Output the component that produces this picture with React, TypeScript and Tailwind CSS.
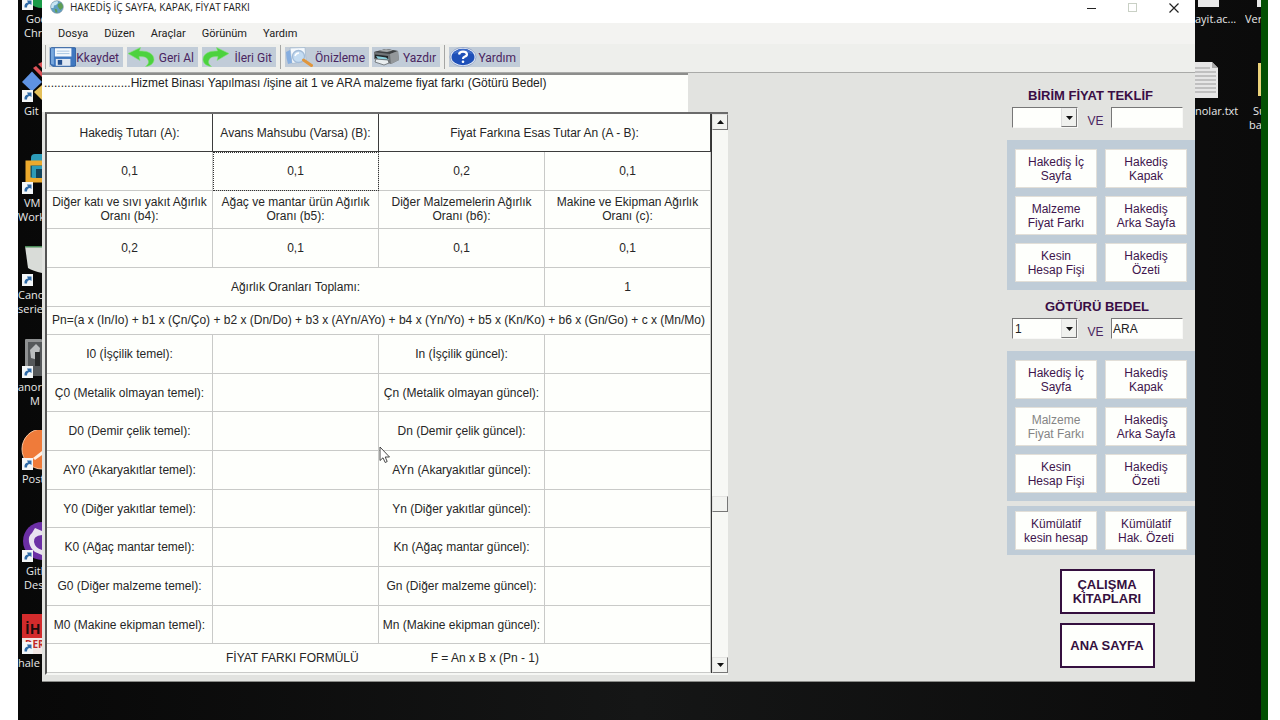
import { useState } from "react"
import type { ReactNode } from "react"
import clsx from "clsx"

const menus = ["Dosya", "Düzen", "Araçlar", "Görünüm", "Yardım"]

const indexRows = [
  ["I0 (İşçilik temel):", "In (İşçilik güncel):"],
  ["Ç0 (Metalik olmayan temel):", "Çn (Metalik olmayan güncel):"],
  ["D0 (Demir çelik temel):", "Dn (Demir çelik güncel):"],
  ["AY0 (Akaryakıtlar temel):", "AYn (Akaryakıtlar güncel):"],
  ["Y0 (Diğer yakıtlar temel):", "Yn (Diğer yakıtlar güncel):"],
  ["K0 (Ağaç mantar temel):", "Kn (Ağaç mantar güncel):"],
  ["G0 (Diğer malzeme temel):", "Gn (Diğer malzeme güncel):"],
  ["M0 (Makine ekipman temel):", "Mn (Makine ekipman güncel):"],
]

const reportButtons = [
  ["Hakediş İç", "Sayfa"],
  ["Hakediş", "Kapak"],
  ["Malzeme", "Fiyat Farkı"],
  ["Hakediş", "Arka Sayfa"],
  ["Kesin", "Hesap Fişi"],
  ["Hakediş", "Özeti"],
]

/* ---------- icons ---------- */

function GlobeIcon() {
  return (
    <svg viewBox="0 0 14 14" className="size-3.5" aria-hidden="true">
      <circle cx="7" cy="7" r="6.3" fill="#5f9fc4" stroke="#7d8f99" strokeWidth=".6" />
      <path d="M2 3.5Q4 1 7.5 1L8 3 6 5 4 5.5 3.5 8 1.2 8Q.8 5 2 3.500Z" fill="#c9e6f2" />
      <path d="M8 4l3-1.500Q13 4.500 13 7.500L10.500 10 9 8.500 7.500 6ZM4.500 8.500 7 9.500 7.500 12.500 5.500 12.500Z" fill="#5f9e54" />
    </svg>
  )
}

function SaveIcon() {
  return (
    <svg viewBox="0 0 28 20" className="h-5 w-7" aria-hidden="true">
      <path d="M1.500 1.500Q1.500 .5 2.500 .5H26.500Q27.500 .5 27.500 1.500V18Q27.500 19.500 26 19.500H4L1.500 17.500Z" fill="#3f78c0" stroke="#2a5a9c" />
      <path d="M2 1h3v17l-3-1Z" fill="#78a8dd" />
      <rect x="6" y="1" width="17" height="8.500" fill="#f3f8fc" />
      <path d="M8 4h13M8 6.500h13" stroke="#a8c5e2" />
      <rect x="7" y="12" width="15" height="7" fill="#dfe8f2" />
      <rect x="9" y="13" width="4.500" height="5" fill="#23508f" />
    </svg>
  )
}

function UndoIcon({ flip }: { flip?: boolean }) {
  return (
    <svg viewBox="0 0 28 20" className={clsx("h-5 w-7", flip && "-scale-x-100")} aria-hidden="true">
      <path
        d="M1 6.500 13.500 .5 12.500 4C21 3.500 27 7 27 12.500 27 16 24 19 18.500 19.500 21.500 17 22 15.500 21 13 19.800 10 16 9.300 12 9.700L13 13.500Z"
        fill="#4cd23e"
        stroke="#86e07c"
        strokeWidth=".6"
      />
    </svg>
  )
}

function PreviewIcon() {
  return (
    <svg viewBox="0 0 28 20" className="h-5 w-7" aria-hidden="true">
      <path d="M5 1 20 .5 21 14 7 16.500Z" fill="#f5f9fd" stroke="#9db5cc" strokeWidth=".7" />
      <path d="M1 5 5 3 7 16 3 17Q1 11 1 5Z" fill="#86aee0" />
      <circle cx="13.500" cy="9.500" r="6" fill="#c4dcf2" stroke="#a3bcd8" strokeWidth="1.300" />
      <path d="M10 9q1-3 4-3" fill="none" stroke="#fff" strokeWidth="1.400" />
      <path d="M18.500 13 26.500 18.500" stroke="#e0963c" strokeWidth="3" strokeLinecap="round" />
    </svg>
  )
}

function PrinterIcon() {
  return (
    <svg viewBox="0 0 28 20" className="h-5 w-7" aria-hidden="true">
      <path d="M2 5 14 2 26 4 27 13 19 17 2 12Z" fill="#707477" />
      <path d="M2 5 14 2 26 4 18 7Z" fill="#3e4143" />
      <path d="M6 4 14 2 21 3.500 15 5Z" fill="#a5a9ab" />
      <path d="M18 7 26 4 27 13 19 17Z" fill="#94989b" />
      <path d="M3 7.500 16 9V13L3 11Z" fill="#222628" />
      <path d="M4 9 14 10.500 17 13 6 12Z" fill="#8ad0dc" />
      <path d="M4 12 16 13 17 16 12 18 3 15Z" fill="#e9eef0" stroke="#55595c" strokeWidth=".7" />
    </svg>
  )
}

function HelpIcon() {
  return (
    <svg viewBox="0 0 28 20" className="h-5 w-7" aria-hidden="true">
      <ellipse cx="14" cy="10" rx="13" ry="9.500" fill="#e8eef8" stroke="#8195bd" strokeWidth=".7" />
      <ellipse cx="14" cy="10" rx="11.500" ry="8.300" fill="#1f50b8" />
      <path d="M4 7Q8 2 14 2t10 5Q14 4 4 7Z" fill="#3f6cc8" />
      <path d="M10 7.500Q10.500 4.700 14 4.700T18 7.300Q18 9 15.500 9.800 14 10.400 14 12" fill="none" stroke="#fff" strokeWidth="2.200" />
      <circle cx="14" cy="14.800" r="1.300" fill="#fff" />
    </svg>
  )
}

function Triangle({ up }: { up?: boolean }) {
  return (
    <svg viewBox="0 0 7 4" className="h-1 w-[7px]" aria-hidden="true">
      <path d={up ? "M0 4 3.500 0 7 4Z" : "M0 0H7L3.500 4Z"} fill="#111" />
    </svg>
  )
}

/* ---------- desktop behind the window ---------- */

function Shortcut({ lines, children }: { lines: { text: string; className: string }[]; children: ReactNode }) {
  return (
    <div className="relative h-[92px] shrink-0 overflow-hidden">
      <svg viewBox="0 0 24 40" className="h-10 w-6" aria-hidden="true">
        {children}
        <rect x="4" y="28" width="11" height="12" fill="#f3f6f8" />
        <path d="M6.500 37.500Q6 33 10 32.500L9 30.500H13.500V35L12 34Q9 34 9 37.500Z" fill="#2e6aa8" />
      </svg>
      <div className="mt-0.5 text-[11px] leading-[14px] whitespace-nowrap text-[#e8e8e8]">
        {lines.map((line) => (
          <div key={line.text} className={line.className}>
            {line.text}
          </div>
        ))}
      </div>
    </div>
  )
}

function LeftDesktop() {
  return (
    <div className="-mt-[30px] flex w-6 shrink-0 flex-col">
      <Shortcut lines={[{ text: "Goo", className: "pl-2" }, { text: "Chr", className: "pl-1.5" }]}>
        <circle cx="24" cy="20" r="18" fill="#1b9b48" />
      </Shortcut>
      <Shortcut lines={[{ text: "Git", className: "pl-1.5" }]}>
        <path d="M4 20 14 9.500 24 20 14 29.500Z" fill="#5f93e3" />
        <path d="M15 6 24 15V10L18 4ZM20 2 24 6V0Z" fill="#dc5258" />
        <path d="M16 30 24 23V38Z" fill="#e4c05a" />
      </Shortcut>
      <Shortcut lines={[{ text: "VM", className: "pl-1.5" }, { text: "Work", className: "pl-0" }]}>
        <path d="M13 7V4Q13 0 17 0H24V7Z" fill="#2c9bb8" />
        <path d="M24 9H10V26H24" fill="#125a75" stroke="#eba92d" strokeWidth="5" />
        <rect x="14" y="12" width="10" height="12" fill="#2c9bb8" />
        <rect x="18" y="15" width="6" height="9" fill="#12445c" />
      </Shortcut>
      <Shortcut lines={[{ text: "Cano", className: "pl-0" }, { text: "series", className: "pl-0" }]}>
        <path d="M7 0H24V27Q15 25 10 22Z" fill="#d9dcd8" />
        <path d="M7 0H24V1.500H7Z" fill="#4b8a58" />
      </Shortcut>
      <Shortcut lines={[{ text: "anor", className: "pl-0" }, { text: "M", className: "pl-3" }]}>
        <rect x="7" y="1" width="17" height="37" rx="1" fill="#8f9192" />
        <rect x="10" y="4" width="14" height="34" fill="#55585a" />
        <path d="M12 12 18 6 22 10 20 22 13 20Z" fill="#b9bcbd" />
        <rect x="17" y="14" width="5" height="14" fill="#262829" />
      </Shortcut>
      <Shortcut lines={[{ text: "Post", className: "pl-1" }]}>
        <circle cx="24" cy="19" r="20" fill="#ef7b3a" stroke="#f7c29b" />
        <path d="M15 28 24 21V25L17 30Z" fill="#fff0e4" />
      </Shortcut>
      <Shortcut lines={[{ text: "Gitl", className: "pl-2" }, { text: "Des", className: "pl-1.5" }]}>
        <circle cx="24" cy="19" r="19" fill="#6c2fa5" />
        <path d="M24 9 17 6 14 11Q10 14 11 20T17 30L24 33V28Q17 26 16 20T24 13Z" fill="#e9e2f0" />
      </Shortcut>
      <Shortcut lines={[{ text: "hale", className: "pl-0" }]}>
        <rect x="4" width="20" height="24" fill="#d32b2c" />
        <rect x="4" y="24" width="20" height="16" fill="#f2e9e6" />
        <text x="7" y="20" fontSize="14" fontWeight="700" fill="#1d0d0d">İH</text>
        <text x="7" y="34" fontSize="10" fontWeight="700" fill="#c02828">DER</text>
      </Shortcut>
    </div>
  )
}

function RightDesktop() {
  return (
    <div className="grid w-[66px] shrink-0 grid-cols-[50px_16px] grid-rows-[62px_auto] content-start text-[11px] leading-[14px] whitespace-nowrap text-[#e8e8e8]">
      <div className="overflow-hidden">
        <svg viewBox="0 0 50 12" className="h-3 w-[50px]" aria-hidden="true">
          <path d="M3 0H24V7H3Z" fill="#e8e8e8" />
        </svg>
        <div>ayit.ac...</div>
      </div>
      <div className="overflow-hidden">
        <svg viewBox="0 0 16 12" className="h-3 w-4" aria-hidden="true">
          <path d="M12 0H16V7H12Z" fill="#e8e8e8" />
        </svg>
        <div>Veri</div>
      </div>
      <div className="overflow-hidden">
        <svg viewBox="0 0 50 42" className="h-[42px] w-[50px]" aria-hidden="true">
          <path d="M0 0H17L23 6V36H0Z" fill="#e6e6e6" />
          <path d="M17 0V6H23Z" fill="#a9a9a9" />
          <path d="M0 6H15M0 10H21M0 14H21M0 18H21M0 22H21M0 26H21M0 30H21" stroke="#9a9a9a" />
        </svg>
        <div>nolar.txt</div>
      </div>
      <div className="overflow-hidden">
        <svg viewBox="0 0 16 42" className="h-[42px] w-4" aria-hidden="true">
          <path d="M13 1H16V34H13Z" fill="#ecd27a" />
        </svg>
        <div className="pl-2">Su</div>
        <div className="pl-1">ba</div>
      </div>
    </div>
  )
}

/* ---------- window parts ---------- */

function ToolButton({ icon, label, className }: { icon: ReactNode; label: string; className: string }) {
  return (
    <button className={clsx("flex h-5 items-center justify-between bg-[#c1ccd8] pr-1 font-[Roboto,sans-serif] text-[12px] leading-4 whitespace-nowrap text-[#4a2560]", className)}>
      {icon}
      <span className="pt-0.5">{label}</span>
    </button>
  )
}

function Separator() {
  return <div className="mx-1 h-6 w-px bg-[#a5a6a4]" />
}

function TitleBar() {
  return (
    <div className="flex h-[23px] items-start bg-white pl-2">
      <GlobeIcon />
      <h1 className="ml-1.5 text-[10px] leading-[15px] text-[#222] font-['Open_Sans',sans-serif]">HAKEDİŞ İÇ SAYFA, KAPAK, FİYAT FARKI</h1>
      <div className="ml-auto flex pr-4">
        <button aria-label="Simge durumuna küçült" className="flex h-4 w-[41px] items-center justify-start">
          <svg viewBox="0 0 10 10" className="size-2.5"><path d="M0 5.500H9" stroke="#222" /></svg>
        </button>
        <button aria-label="Ekranı kapla" disabled className="flex h-4 w-[41px] items-center justify-start">
          <svg viewBox="0 0 10 10" className="size-2.5"><rect x=".5" y=".5" width="8" height="8" fill="none" stroke="#c9d0c5" /></svg>
        </button>
        <button aria-label="Kapat" className="flex h-4 items-center">
          <svg viewBox="0 0 10 10" className="size-2.5"><path d="M.5 .5 9.500 9.500M9.500 .5 .5 9.500" stroke="#222" strokeWidth="1.200" /></svg>
        </button>
      </div>
    </div>
  )
}

const cell = "border-r border-b border-[#c9cac8] p-0 text-center align-middle font-normal"
const headCell = "border-r border-b border-[#3c3c3c] p-0 text-center align-middle font-normal"

function PriceTable() {
  return (
    <table className="h-[559px] w-full min-w-0 table-fixed border-separate border-spacing-0 bg-[#fefffc] text-[12px] leading-[14px] text-[#262626]">
      <thead>
        <tr className="h-[38px]">
          <th className={headCell}>Hakediş Tutarı (A):</th>
          <th className={headCell}>Avans Mahsubu (Varsa) (B):</th>
          <th colSpan={2} className={headCell}>Fiyat Farkına Esas Tutar An (A - B):</th>
        </tr>
      </thead>
      <tbody>
        <tr className="h-[38px]">
          <td className={cell}>0,1</td>
          <td className={clsx(cell, "outline-1 -outline-offset-1 outline-dotted outline-[#333]")}>0,1</td>
          <td className={cell}>0,2</td>
          <td className={cell}>0,1</td>
        </tr>
        <tr className="h-[38px]">
          <td className={cell}>Diğer katı ve sıvı yakıt Ağırlık<br />Oranı (b4):</td>
          <td className={cell}>Ağaç ve mantar ürün Ağırlık<br />Oranı (b5):</td>
          <td className={cell}>Diğer Malzemelerin Ağırlık<br />Oranı (b6):</td>
          <td className={cell}>Makine ve Ekipman Ağırlık<br />Oranı (c):</td>
        </tr>
        <tr className="h-[38px]">
          <td className={cell}>0,2</td>
          <td className={cell}>0,1</td>
          <td className={cell}>0,1</td>
          <td className={cell}>0,1</td>
        </tr>
        <tr className="h-[38px]">
          <td colSpan={3} className={cell}>Ağırlık Oranları Toplamı:</td>
          <td className={cell}>1</td>
        </tr>
        <tr className="h-[28px]">
          <td colSpan={4} className={cell}>
            Pn=(a x (In/Io) + b1 x (Çn/Ço) + b2 x (Dn/Do) + b3 x (AYn/AYo) + b4 x (Yn/Yo) + b5 x (Kn/Ko) + b6 x (Gn/Go) + c x (Mn/Mo)
          </td>
        </tr>
        {indexRows.map(([base, current]) => (
          <tr key={base} className="h-[38px]">
            <td className={cell}>{base}</td>
            <td className={cell} />
            <td className={cell}>{current}</td>
            <td className={cell} />
          </tr>
        ))}
        <tr className="h-[28px]">
          <td colSpan={4} className={cell}>
            <div className="flex justify-center gap-[72px] pl-2">
              <span>FİYAT FARKI FORMÜLÜ</span>
              <span>F = An x B x (Pn - 1)</span>
            </div>
          </td>
        </tr>
      </tbody>
    </table>
  )
}

const raised = "flex h-4 w-full items-center justify-center border border-t-[#e4e4e2] border-r-[#777] border-b-[#777] border-l-[#e4e4e2] bg-[#f2f3f0]"

function ScrollBar() {
  return (
    <div className="flex w-4 shrink-0 flex-col bg-[#f7f8f5]">
      <button aria-label="Yukarı kaydır" className={raised}><Triangle up /></button>
      <div className="h-[366px]" />
      <div className={raised} />
      <div className="flex-1" />
      <button aria-label="Aşağı kaydır" className={raised}><Triangle /></button>
    </div>
  )
}

const sunken = "h-[21px] rounded-none border border-t-[#777] border-r-[#f8f8f6] border-b-[#f8f8f6] border-l-[#777] bg-[#fefffc] text-[12px] leading-[14px] text-[#222] outline-none"

interface OfferProps {
  title: string
  options: string[]
  kind: string
  disabled?: number
  titleClass: string
}

function OfferGroup({ title, options, kind, disabled, titleClass }: OfferProps) {
  const [value, setValue] = useState(kind)

  return (
    <section>
      <h2 className={clsx("text-[13px] leading-[15px] font-bold text-[#3a0d45]", titleClass)}>{title}</h2>
      <div className="mt-1 flex items-center pr-3 pl-[5px]">
        <div className="relative">
          <select aria-label={title} className={clsx(sunken, "block w-[66px] appearance-none pl-0.5")}>
            {options.map((option) => (
              <option key={option}>{option}</option>
            ))}
          </select>
          <div className="pointer-events-none absolute top-px right-px flex h-[19px] w-4 items-center justify-center border border-t-[#eee] border-r-[#777] border-b-[#777] border-l-[#ddd] bg-[#f0f1ee]">
            <Triangle />
          </div>
        </div>
        <label className="flex flex-1 items-center text-[12px] leading-[14px] text-[#4a2560]">
          <span className="flex-1 pt-1.5 pl-0.5 text-center">VE</span>
          <input value={value} onChange={(e) => setValue(e.target.value)} className={clsx(sunken, "w-[72px] px-px")} />
        </label>
      </div>
      <div className="mt-3 grid grid-cols-2 gap-2 bg-[#bfccd7] px-2 pt-[9px] pb-2">
        {reportButtons.map(([first, second], i) => (
          <PanelButton key={i} first={first} second={second} disabled={i === disabled} />
        ))}
      </div>
    </section>
  )
}

function PanelButton({ first, second, disabled }: { first: string; second: string; disabled?: boolean }) {
  return (
    <button
      disabled={disabled}
      className="h-[39px] border border-[#e2dfd8] bg-[#fefffc] text-[12px] leading-[14px] text-[#40154d] disabled:text-[#858585]"
    >
      {first}
      <br />
      {second}
    </button>
  )
}

function SidePanel() {
  const pageButton = "h-[45px] w-[95px] border-2 border-[#35103f] bg-[#fefffc] text-[13px] leading-[14px] font-bold text-[#35103f]"

  return (
    <aside className="flex w-[188px] shrink-0 flex-col pt-[15px]">
      <OfferGroup title="BİRİM FİYAT TEKLİF" options={[""]} kind="" titleClass="pl-[21px]" />
      <div className="h-[9px]" />
      <OfferGroup title="GÖTÜRÜ BEDEL" options={["1"]} kind="ARA" disabled={2} titleClass="pl-[38px]" />
      <div className="mt-[5px] grid grid-cols-2 gap-2 bg-[#bfccd7] px-2 py-[5px]">
        <PanelButton first="Kümülatif" second="kesin hesap" />
        <PanelButton first="Kümülatif" second="Hak. Özeti" />
      </div>
      <div className="mt-3.5 flex flex-col items-center gap-[9px] pl-3">
        <button className={pageButton}>ÇALIŞMA<br />KİTAPLARI</button>
        <button className={pageButton}>ANA SAYFA</button>
      </div>
    </aside>
  )
}

function MainWindow() {
  return (
    <main className="flex min-w-0 flex-1 flex-col self-start border-b border-[#8a8b88] bg-[#e2e3e0] font-['Liberation_Sans',sans-serif]">
      <TitleBar />
      <nav className="flex h-[21px] items-center gap-4 bg-[#f3f3f1] pl-4 font-[Roboto,sans-serif] text-[11px] leading-4 text-[#222]">
        {menus.map((menu) => (
          <button key={menu}>{menu}</button>
        ))}
      </nav>
      <div className="flex h-[29px] items-center border-b border-[#a9aaa8] bg-[#eeefec] pb-0.5 pl-[3px]">
        <div className="mr-[3px] h-6 w-px bg-[#a5a6a4]" />
        <div className="flex gap-1">
          <ToolButton icon={<SaveIcon />} label="Kkaydet" className="w-[74px]" />
          <ToolButton icon={<UndoIcon />} label="Geri Al" className="w-[71px]" />
          <ToolButton icon={<UndoIcon flip />} label="İleri Git" className="w-[74px]" />
        </div>
        <Separator />
        <div className="flex gap-[3px]">
          <ToolButton icon={<PreviewIcon />} label="Önizleme" className="w-[84px]" />
          <ToolButton icon={<PrinterIcon />} label="Yazdır" className="w-[68px]" />
        </div>
        <Separator />
        <ToolButton icon={<HelpIcon />} label="Yardım" className="w-[71px]" />
      </div>
      <div className="flex justify-between">
        <div className="relative w-[686px]">
          <textarea
            aria-label="İşin adı"
            defaultValue="..........................Hizmet Binası Yapılması /işine ait 1 ve ARA malzeme fiyat farkı (Götürü Bedel)"
            className="block h-[39px] w-[646px] resize-none rounded-none border-t-2 border-[#8d8e8c] bg-[#fefffc] px-0.5 pt-px text-[12px] leading-[14px] text-[#222] outline-none"
          />
          <div className="ml-[3px] flex border-t-2 border-b-2 border-l-2 border-t-[#6b6b6b] border-b-[#f6f7f4] border-l-[#555]">
            <PriceTable />
            <div className="w-px shrink-0 bg-[#333]" />
            <ScrollBar />
          </div>
          <svg viewBox="0 0 12 18" className="absolute top-[373px] left-[337px] h-[18px] w-3" aria-hidden="true">
            <path d="M1 1V14.500L4 11.800 6.200 16.500 8.200 15.500 6.200 11H10.500Z" fill="#fff" stroke="#333" strokeWidth=".9" />
          </svg>
        </div>
        <SidePanel />
      </div>
      <div className="h-1.5" />
    </main>
  )
}

export default function App() {
  return (
    <div className="flex h-screen overflow-hidden bg-white font-['Open_Sans',sans-serif]">
      <div className="w-[18px] shrink-0" />
      <div className="flex min-w-0 flex-1 overflow-hidden bg-linear-to-r from-[#080808] via-[#151616] to-[#0b0b0b]">
        <LeftDesktop />
        <MainWindow />
        <RightDesktop />
      </div>
      <div className="w-[7px] shrink-0 bg-[#035003]" />
      <div className="w-3 shrink-0" />
    </div>
  )
}
